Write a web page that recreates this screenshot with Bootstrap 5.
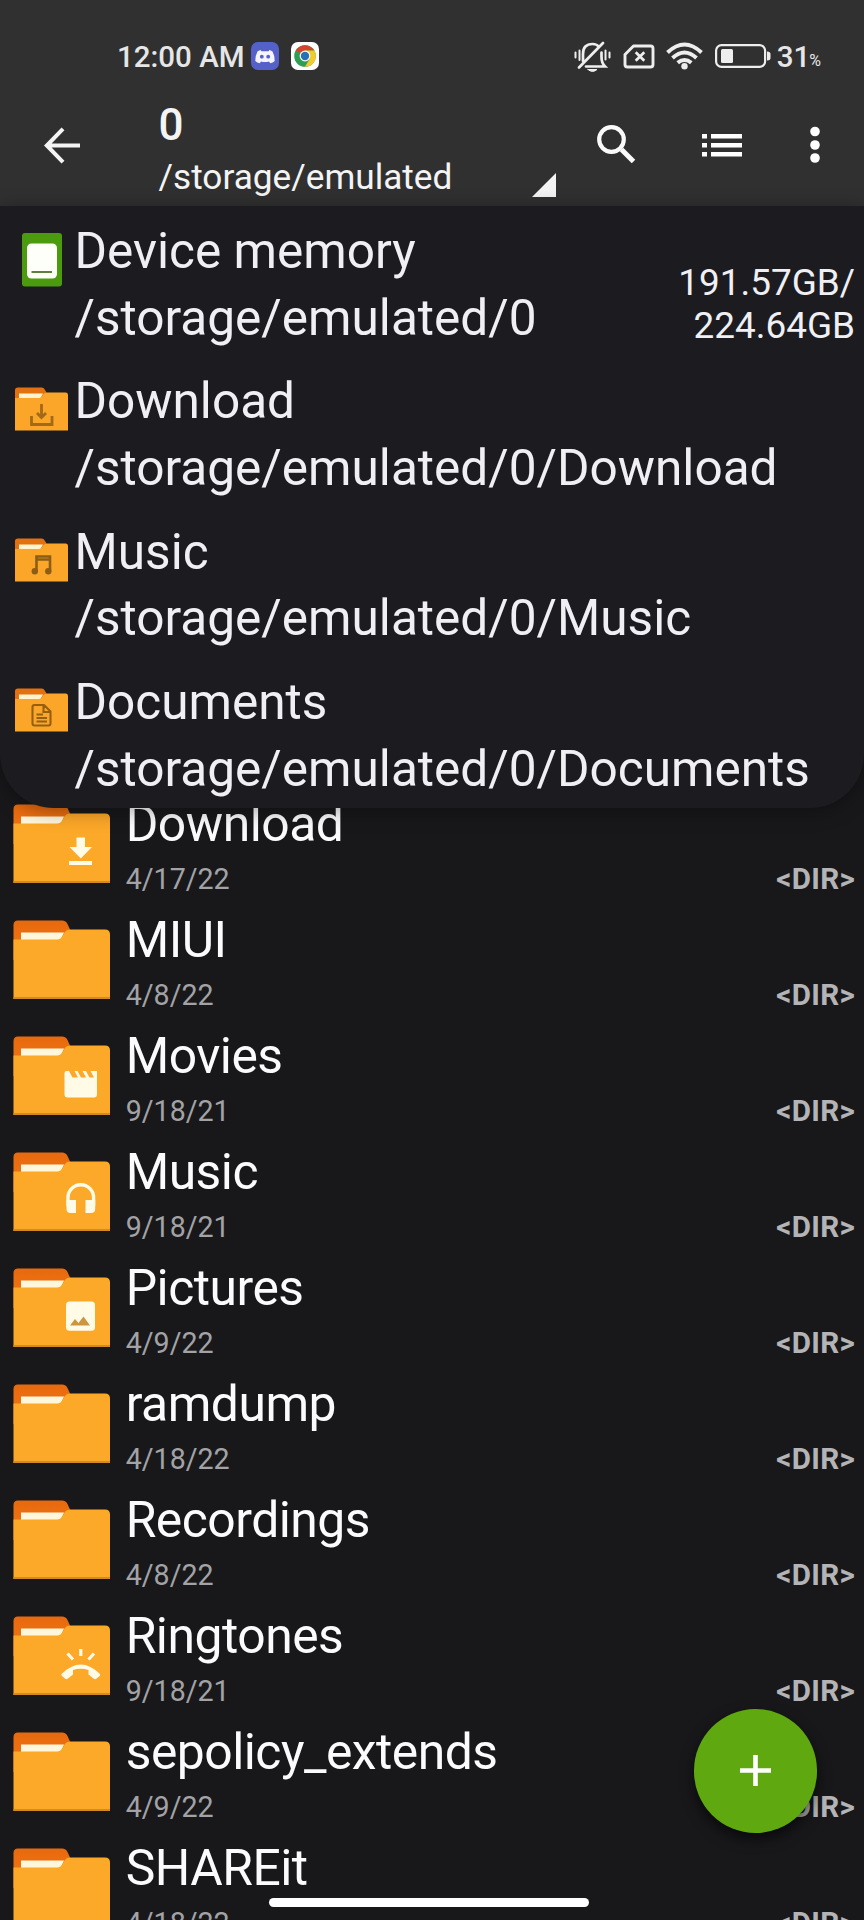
<!DOCTYPE html>
<html lang="en">
<head>
<meta charset="utf-8">
<meta name="viewport" content="width=device-width, initial-scale=1">
<title>File manager</title>
<link href="https://cdn.jsdelivr.net/npm/bootstrap@5.3.0/dist/css/bootstrap.min.css" rel="stylesheet">
<style>
  body { background: #18181b; color: #fff; font-family: Roboto, "Liberation Sans", sans-serif; }
  .screen { width: 864px; height: 1920px; background: #18181b; }
  svg { display: block; flex: none; }
  .topbar { height: 206px; background: #303030; color: #f4f4f4; }
  .statusbar { height: 92px; padding: 39px 43px 0 117px; font-size: 29.5px; font-weight: 500; line-height: 36px; color: #e6e6e6; }
  .notices { margin: 3px auto 0 6px; gap: 12px; }
  .percent { font-size: 16px; font-weight: 400; margin: 4px 0 0 -1px; }
  .toolbar { height: 114px; padding-left: 44px; }
  .place { margin-left: 78.5px; width: 399.5px; }
  .place-name { font-size: 44px; font-weight: 500; line-height: 50px; margin-top: 8px; }
  .place-path { font-size: 35.2px; line-height: 40px; margin-top: 7px; }
  .places { top: 206px; height: 601.5px; background: #1c1c20; color: #f0f0f4; border-radius: 0 0 54px 54px; box-shadow: 0 3px 20px rgba(0,0,0,.35); z-index: 2; }
  .place-item { height: 150.4px; padding-top: 12px; font-size: 49.55px; line-height: 66.6px; }
  .place-icon { width: 74.5px; padding-left: 15px; }
  .place-icon svg { margin-top: 19px; }
  .place-icon .device { margin: 14.5px 0 0 7px; }
  .usage { font-size: 36.9px; line-height: 43.4px; margin: 43px 9px 0 0; }
  .files { padding-top: 588px; }
  .file-row { height: 116px; padding: 0 9px 0 12px; }
  .folder { margin-top: 10.4px; }
  .file-text { margin-left: 15.7px; }
  .file-name { font-size: 49.8px; line-height: 60px; letter-spacing: -.5px; color: #fbfbfd; }
  .file-date { font-size: 28.6px; line-height: 40px; margin-top: 5px; color: #a3a3a6; }
  .file-kind { font-size: 29.6px; font-weight: 700; line-height: 40px; margin-top: 65px; letter-spacing: .3px; color: #b4b4b7; }
  .fab { left: 693.5px; top: 1709px; width: 123.5px; height: 123.5px; background: #5fa80f; box-shadow: 0 6px 14px rgba(0,0,0,.6); z-index: 3; }
  .homebar { left: 269px; top: 1897.5px; width: 320px; height: 9px; border-radius: 5px; background: #fff; z-index: 4; }
</style>
</head>
<body>
<svg width="0" height="0" class="position-absolute" aria-hidden="true">
  <defs>
    <linearGradient id="tab" x1="0" x2="0" y1="0" y2="1"><stop offset="0" stop-color="#e8690f"/><stop offset="1" stop-color="#f07a12"/></linearGradient>
    <symbol id="folder" viewBox="0 0 98 80">
      <path d="M1.5 40V5Q1.5.5 6 .5H50Q54 .5 55.500 4L60 14V40Z" fill="url(#tab)"/>
      <path d="M9 12.500H52L47 24H9Z" fill="#fff6dc"/>
      <path d="M1.500 19.500H45Q48.500 19.500 50.500 16L52.500 12.500Q54.500 9.500 58 9.500H93Q98 9.500 98 14.500V79H1.500Z" fill="#fca828"/>
      <path d="M1.500 77H98V79H1.500Z" fill="#d48a24"/>
    </symbol>
    <symbol id="mini" viewBox="0 0 53 44">
      <path d="M0 20V3Q0 .5 3 .5H27Q29 .5 30 3L33 8V20Z" fill="#e3710f"/>
      <path d="M4 6.500H28L25 12H4Z" fill="#fff3d0"/>
      <path d="M0 11H24Q26 11 27.500 8.500L28.500 7Q29.500 5.500 32 5.500H51Q53 5.500 53 8V43.500H0Z" fill="#fba629"/>
    </symbol>
  </defs>
</svg>
<div class="screen position-relative overflow-hidden">
  <header class="topbar">
    <div class="statusbar d-flex align-items-start">
      <span>12:00 AM</span>
      <div class="notices d-flex">
        <svg width="28" height="28" viewBox="0 0 28 28"><rect width="28" height="28" rx="7" fill="#5361c9"/><path d="M9.500 8Q7.500 8.500 6.500 9.500Q4 14 4.300 19Q6 20.800 8.800 21.300L10 19.500Q14 20.600 18 19.500L19.200 21.300Q22 20.800 23.700 19Q24 14 21.500 9.500Q20.500 8.500 18.500 8L17.500 9.300H10.500Z" fill="#f5f5ff"/><circle cx="10.800" cy="14.700" r="1.900" fill="#5361c9"/><circle cx="17.200" cy="14.700" r="1.900" fill="#5361c9"/></svg>
        <svg width="28" height="28" viewBox="0 0 28 28"><rect width="28" height="28" rx="7" fill="#fff"/><circle cx="14" cy="14" r="10.800" fill="#2f9e52"/><path d="M14 14L4.700 8.600A10.800 10.800 0 0 1 23.400 8.600H14Z" fill="#d8432f"/><path d="M14 8.600H23.400A10.800 10.800 0 0 1 14 24.800L18.700 16.700Z" fill="#f2cb2c"/><circle cx="14" cy="14" r="5.400" fill="#fff"/><circle cx="14" cy="14" r="4.200" fill="#2672b4"/></svg>
      </div>
      <div class="d-flex align-items-start">
        <svg style="margin:2px 12px 0 0" width="37" height="32" viewBox="0 0 37 32" fill="none" stroke="#eee" stroke-width="2.700" stroke-linecap="round"><path d="M9 20V13Q9 3 18.500 3Q23 3 25 6M27.500 11.500V16Q27.500 22 31 25.500H12M5 26.500L29 2"/><path d="M14 28.500H23Q18.500 32.500 14 28.500Z" fill="#eee" stroke-width="1"/><path d="M1.500 11.500V16.500M5.500 9.500V19M31.500 9.500V18.500M35.500 11.500V16.500" stroke-width="2"/></svg>
        <svg style="margin:5px 11px 0 0" width="32" height="26" viewBox="0 0 32 26" fill="none" stroke="#eee" stroke-width="2.900" stroke-linejoin="round"><path d="M10.500 2H27.500Q30 2 30 4.500V20.500Q30 23 27.500 23H4.500Q2 23 2 20.500V10.500Z"/><path d="M12.700 8.200L21.300 16.800M21.300 8.200L12.700 16.800" stroke-width="2.700"/></svg>
        <svg style="margin:3px 12px 0 0" width="37" height="28" viewBox="0 0 37 28" fill="none" stroke="#eee" stroke-width="3.900"><path d="M1.500 10.500Q18.500-5.500 35.500 10.500M6.500 16Q18.500 5 30.500 16M11.700 20.800Q18.500 15 25.300 20.800"/><circle cx="18.500" cy="24.300" r="3.200" fill="#eee" stroke="none"/></svg>
        <svg style="margin:5px 5.500px 0 0" width="56" height="24" viewBox="0 0 56 24"><rect x="1.100" y="1.100" width="49" height="21.800" rx="5.500" fill="none" stroke="#eee" stroke-width="2.200"/><rect x="6" y="5" width="12" height="14" rx="1.500" fill="#eee"/><path d="M52 7.500Q55.500 7.500 55.500 10V14Q55.500 16.500 52 16.500Z" fill="#eee"/></svg>
        <span>31</span><span class="percent">%</span>
      </div>
    </div>
    <div class="toolbar d-flex align-items-start">
      <svg style="margin-top:34.500px" width="36" height="37" viewBox="0 0 36 37" fill="none" stroke="#f4f4f4" stroke-width="4"><path d="M36 18.500H4M19 1.800L2.800 18.500L19 35.200"/></svg>
      <div class="place position-relative">
        <div class="place-name">0</div>
        <div class="place-path">/storage/emulated</div>
        <svg class="position-absolute" style="right:2px;top:81px" width="24" height="24"><path d="M24 0V24H0Z" fill="#f4f4f4"/></svg>
      </div>
      <svg style="margin:33px 0 0 39px" width="39" height="40" viewBox="0 0 39 40" fill="none" stroke="#fafafa"><circle cx="14.500" cy="14.500" r="12.300" stroke-width="4.200"/><path d="M24.500 24.500L36.500 36.500" stroke-width="5"/></svg>
      <svg style="margin:41px 0 0 65px" width="42" height="25" viewBox="0 0 42 25" fill="#fff"><path d="M1 1h5v4.500h-5zM10 1h31v4.500h-31zM1 10h5v4.500h-5zM10 10h31v4.500h-31zM1 19h5v4.500h-5zM10 19h31v4.500h-31z"/></svg>
      <svg style="margin:34px 0 0 67px" width="10" height="38" viewBox="0 0 10 38" fill="#fff"><circle cx="5" cy="5.500" r="4.800"/><circle cx="5" cy="19" r="4.800"/><circle cx="5" cy="32" r="4.800"/></svg>
    </div>
  </header>

  <section class="places position-absolute start-0 w-100">
    <div class="place-item d-flex align-items-start">
      <div class="place-icon"><svg class="device" width="40" height="54" viewBox="0 0 40 54"><rect width="40" height="53.500" rx="3" fill="#4c9a0d"/><rect x="5" y="10.500" width="30" height="35" rx="4.500" fill="#fdfff8"/><path d="M9.500 39H30" stroke="#5f8038" stroke-width="2"/></svg></div>
      <div><div>Device memory</div><div>/storage/emulated/0</div></div>
      <div class="usage ms-auto text-end">191.57GB/<br>224.64GB</div>
    </div>
    <div class="place-item d-flex align-items-start">
      <div class="place-icon"><svg width="53" height="44" viewBox="0 0 53 44"><use href="#mini"/><path d="M26.500 17V30M22 26L26.500 30.500L31 26M16.500 29V37.500H37V29" fill="none" stroke="#a06a1a" stroke-width="2.800"/></svg></div>
      <div><div>Download</div><div>/storage/emulated/0/Download</div></div>
    </div>
    <div class="place-item d-flex align-items-start">
      <div class="place-icon"><svg width="53" height="44" viewBox="0 0 53 44"><use href="#mini"/><path d="M21.500 33V18.500H35V33M21.500 21.500H35" fill="none" stroke="#8c5d14" stroke-width="2.600"/><circle cx="19.800" cy="33.300" r="3.200" fill="#8c5d14"/><circle cx="33.300" cy="33.300" r="3.200" fill="#8c5d14"/></svg></div>
      <div><div>Music</div><div>/storage/emulated/0/Music</div></div>
    </div>
    <div class="place-item d-flex align-items-start">
      <div class="place-icon"><svg width="53" height="44" viewBox="0 0 53 44"><use href="#mini"/><path d="M19.500 17H29L35.500 23.500V35.500Q35.500 37.500 33.500 37.500H19.500Q17.500 37.500 17.500 35.500V19Q17.500 17 19.500 17ZM28.500 17V24H35.500M21.500 26.500H28M21.500 30H32M21.500 33.500H32" fill="none" stroke="#946010" stroke-width="2.100"/></svg></div>
      <div><div>Documents</div><div>/storage/emulated/0/Documents</div></div>
    </div>
  </section>

  <main class="files">
    <div id="rows"></div>
  </main>

  <button class="fab btn rounded-circle border-0 p-0 position-absolute d-flex align-items-center justify-content-center" aria-label="Add"><svg width="31" height="31" viewBox="0 0 31 31"><path d="M15.500 0V31M0 15.500H31" stroke="#fff" stroke-width="4.600"/></svg></button>
  <div class="homebar position-absolute"></div>
</div>
<script src="https://cdn.jsdelivr.net/npm/bootstrap@5.3.0/dist/js/bootstrap.bundle.min.js"></script>
<script>
  const fg = '#fffbe6';
  const glyphs = {
    download: `<path d="M64.500 33.500H73V43H80L68.800 54.500L57.500 43H64.500Z" fill="${fg}"/><path d="M57 57H80V61H57Z" fill="${fg}"/>`,
    movie: `<path d="M54.500 35H57L60.500 41.500H66L62.500 35H65.500L69 41.500H74L70.500 35H74L77.500 41.500H82L78.500 35H85V58.500Q85 61.500 82 61.500H55.500Q52.500 61.500 52.500 58.500V37Q52.500 35 54.500 35Z" fill="${fg}"/>`,
    headphones: `<path d="M56 54V45.500A12.800 12.800 0 0 1 81.600 45.500V54" fill="none" stroke="${fg}" stroke-width="3.400"/><path d="M54.500 48H64V61H58.500Q54.500 61 54.500 57ZM73.500 48H83.200V57Q83.200 61 79 61H73.500Z" fill="${fg}"/>`,
    picture: `<rect x="54" y="33.500" width="29" height="29.300" rx="3.500" fill="${fg}"/><path d="M58 57.500L63 51L66.500 55L71.500 48.500L78 57.500Z" fill="#cc9540"/>`,
    ring: `<path d="M49.500 58Q68.800 39 88 58Q88.500 59 87.700 60L84 63Q82.500 63.500 81.500 62.500L76.500 58.500V54Q68.800 51.500 61 54V58.500L56 62.500Q55 63.500 53.500 63L50 60Q49 59 49.500 58Z" fill="${fg}"/><path d="M68.800 33V40M55.500 37.500L61 43.500M82 37.500L76.500 43.500" stroke="${fg}" stroke-width="3.200"/>`
  };
  const files = [
    ['Download', '4/17/22', 'download'], ['MIUI', '4/8/22'], ['Movies', '9/18/21', 'movie'],
    ['Music', '9/18/21', 'headphones'], ['Pictures', '4/9/22', 'picture'], ['ramdump', '4/18/22'],
    ['Recordings', '4/8/22'], ['Ringtones', '9/18/21', 'ring'], ['sepolicy_extends', '4/9/22'], ['SHAREit', '4/18/22']
  ];
  document.getElementById('rows').innerHTML = files.map(([name, date, icon]) => `
    <div class="file-row d-flex align-items-start">
      <svg class="folder" width="98" height="80" viewBox="0 0 98 80"><use href="#folder"/>${glyphs[icon] || ''}</svg>
      <div class="file-text"><div class="file-name">${name}</div><div class="file-date">${date}</div></div>
      <div class="file-kind ms-auto">&lt;DIR&gt;</div>
    </div>`).join('');
</script>
</body>
</html>
